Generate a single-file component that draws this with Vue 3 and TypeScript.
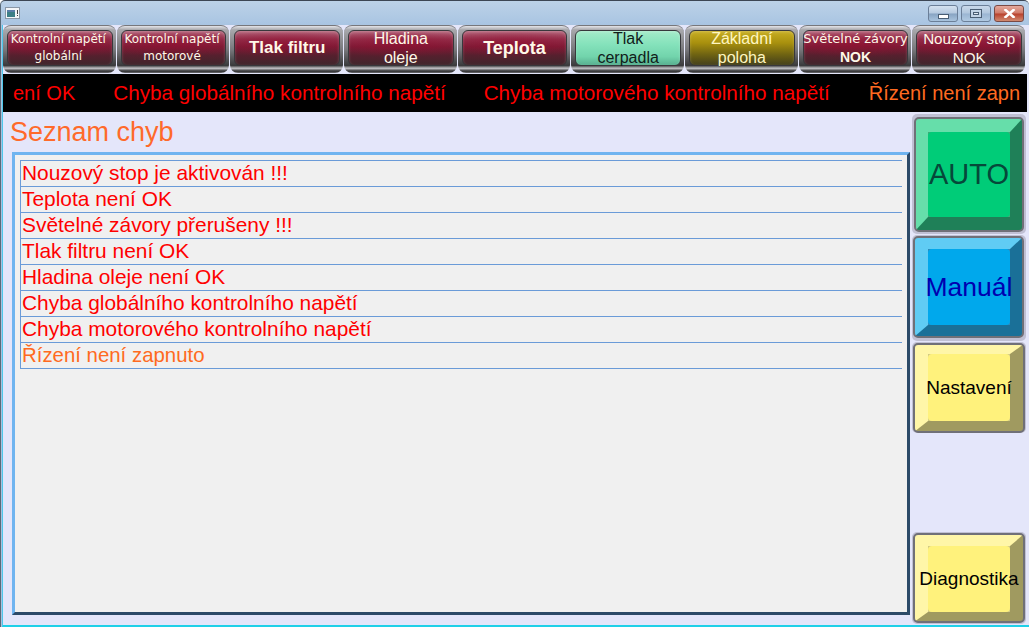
<script setup lang="ts">
interface TopButton { lines: string[]; tone: string; kind: string }
const topButtons: TopButton[] = [
  { lines: ['Kontrolní napětí', 'globální'], tone: 'red', kind: 'small' },
  { lines: ['Kontrolní napětí', 'motorové'], tone: 'red', kind: 'small' },
  { lines: ['Tlak filtru'], tone: 'red', kind: 'bold' },
  { lines: ['Hladina', 'oleje'], tone: 'red', kind: 'plain' },
  { lines: ['Teplota'], tone: 'red', kind: 'boldlg' },
  { lines: ['Tlak', 'cerpadla'], tone: 'green', kind: 'plain' },
  { lines: ['Základní', 'poloha'], tone: 'yellow', kind: 'plain' },
  { lines: ['Světelné závory', 'NOK'], tone: 'red', kind: 'mixed' },
  { lines: ['Nouzový stop', 'NOK'], tone: 'red', kind: 'narrow' },
]
const ticker = [
  { text: 'ení OK', warn: false, tail: true },
  { text: 'Chyba globálního kontrolního napětí', warn: false, tail: false },
  { text: 'Chyba motorového kontrolního napětí', warn: false, tail: false },
  { text: 'Řízení není zapn', warn: true, tail: true },
]
const errors = [
  { text: 'Nouzový stop je aktivován !!!', warn: false },
  { text: 'Teplota není OK', warn: false },
  { text: 'Světelné závory přerušeny !!!', warn: false },
  { text: 'Tlak filtru není OK', warn: false },
  { text: 'Hladina oleje není OK', warn: false },
  { text: 'Chyba globálního kontrolního napětí', warn: false },
  { text: 'Chyba motorového kontrolního napětí', warn: false },
  { text: 'Řízení není zapnuto', warn: true },
]
</script>

<template>
  <div class="window">
    <header class="titlebar">
      <svg class="app-icon" width="15" height="12" viewBox="0 0 15 12">
        <rect x="0.5" y="0.5" width="14" height="11" fill="#f4f6f8" stroke="#8a97a6" />
        <rect x="2" y="3" width="8" height="7" fill="#3d7f86" />
        <rect x="2" y="3" width="8" height="2" fill="#5a7ea8" />
        <rect x="12" y="3" width="1" height="4" fill="#404040" />
        <rect x="12" y="8" width="1" height="1" fill="#404040" />
      </svg>
      <div class="controls">
        <div class="ctl ctl-min"><span class="glyph-min"></span></div>
        <div class="ctl ctl-max"><span class="glyph-max"></span></div>
        <div class="ctl ctl-close">
          <svg width="13" height="9" viewBox="0 0 13 9">
            <path d="M2.5 1 L10.5 8 M10.5 1 L2.5 8" stroke="#fff" stroke-width="2.6" stroke-linecap="square" />
          </svg>
        </div>
      </div>
    </header>
    <div class="client">
      <nav class="topbar">
        <div v-for="(b, i) in topButtons" :key="i" class="gloss">
          <div class="gloss-face" :class="['tone-' + b.tone, 'kind-' + b.kind]">
            <span v-for="(l, j) in b.lines" :key="j" class="gloss-line">{{ l }}</span>
          </div>
        </div>
      </nav>
      <div class="ticker">
        <span v-for="(t, i) in ticker" :key="i" :class="{ warn: t.warn, tail: t.tail }">{{ t.text }}</span>
      </div>
      <div class="main">
        <section class="left">
          <h1 class="heading">Seznam chyb</h1>
          <div class="panel">
            <ul class="list">
              <li v-for="(e, i) in errors" :key="i" :class="{ warn: e.warn }">{{ e.text }}</li>
            </ul>
          </div>
        </section>
        <aside class="side">
          <div class="key key-green"><div class="key-body"><div class="key-face"><span class="key-text key-auto">AUTO</span></div></div></div>
          <div class="key key-blue"><div class="key-body"><div class="key-face"><span class="key-text key-man">Manuál</span></div></div></div>
          <div class="key key-yellow"><div class="key-body"><div class="key-face"><span class="key-text">Nastavení</span></div></div></div>
          <div class="key key-yellow key-last"><div class="key-body"><div class="key-face"><span class="key-text">Diagnostika</span></div></div></div>
        </aside>
      </div>
    </div>
  </div>
</template>

<style>
html, body { margin: 0; padding: 0; overflow: hidden; }
</style>

<style scoped>
.window {
  width: 1029px;
  height: 627px;
  box-sizing: border-box;
  display: flex;
  flex-direction: column;
  font-family: "Liberation Sans", Arial, sans-serif;
  background: linear-gradient(#bcd2e8, #a4c1e0 30px, #a4c1e0);
  border-top: 1px solid #3c4654;
  border-left: 1px solid #5a6a78;
  border-radius: 5px 5px 0 0;
  overflow: hidden;
}
.titlebar {
  height: 24px;
  flex: none;
  display: flex;
  align-items: flex-start;
  justify-content: space-between;
  padding: 6px 0 0 4px;
  box-sizing: border-box;
}
.controls { display: flex; gap: 3px; margin: -2px 5px 0 0; }
.ctl {
  width: 30px;
  height: 17px;
  box-sizing: border-box;
  border: 1px solid #6b7f98;
  border-radius: 3px;
  display: flex;
  align-items: center;
  justify-content: center;
}
.ctl-min { background: linear-gradient(#d5e2f0 0%, #b5c9df 48%, #87a3c2 52%, #a9c4de 100%); }
.ctl-max { background: linear-gradient(#c9d9ea 0%, #b0c6dd 48%, #9ab5d2 52%, #b1cae2 100%); }
.ctl-close { background: linear-gradient(#e4a99c 0%, #cf7a68 48%, #b8402c 52%, #d08a70 100%); border-color: #7a4a44; }
.glyph-min { width: 11px; height: 5px; margin-top: 6px; background: #fff; border: 1px solid #4a5e74; box-sizing: border-box; }
.glyph-max { width: 12px; height: 9px; border: 1px solid #4a5e74; box-sizing: border-box; background: #c3d4e6; position: relative; }
.glyph-max::after { content: ""; position: absolute; left: 2px; top: 2px; width: 6px; height: 3px; border: 1px solid #4a5e74; box-sizing: border-box; background: #e2ebf4; }

.client {
  flex: 1;
  min-height: 0;
  margin-left: 1px;
  background: #e4e6fa;
  display: flex;
  flex-direction: column;
  border-left: 1px solid #4ec8ea;
  border-bottom: 2px solid #20d0e8;
}
.topbar {
  height: 49px;
  flex: none;
  display: grid;
  grid-template-columns: repeat(9, minmax(0, 1fr));
  column-gap: 1px;
  padding-right: 4px;
  box-sizing: border-box;
}
.gloss {
  height: 48px;
  min-width: 0;
  box-sizing: border-box;
  border-radius: 8px;
  border-top: 1px solid #77777b;
  background: linear-gradient(#e4e4e8 0%, #a8a8ac 8%, #78787c 50%, #3a3a3c 84%, #c4c4c8 90%, #2c2c2e 96%, #707074 100%);
  padding: 4px 3px 7px 4px;
  display: flex;
}
.gloss-face {
  flex: 1;
  min-width: 0;
  border-radius: 6px;
  border: 1px solid #38383c;
  box-shadow: inset 0 1px 3px rgba(255, 255, 255, 0.22);
  display: flex;
  flex-direction: column;
  align-items: center;
  justify-content: center;
  box-sizing: border-box;
  white-space: nowrap;
}
.tone-red {
  background:
    radial-gradient(ellipse 70% 40% at 50% 38%, rgba(150, 10, 45, 0.55), rgba(150, 10, 45, 0) 100%),
    linear-gradient(#b5647a 0%, #94304c 24%, #7c1c36 46%, #56202e 72%, #40262c 100%);
  color: #fff8e8;
}
.tone-green {
  background: linear-gradient(#a4ecc9 0%, #84e2bb 40%, #72d4ac 75%, #58b090 100%);
  color: #10201a;
}
.tone-yellow {
  background: linear-gradient(#c8ae22 0%, #a8900e 35%, #6e6212 70%, #44401c 100%);
  color: #fff6c0;
}
.gloss-line { display: block; }
.kind-small { font-family: "DejaVu Sans", sans-serif; font-size: 12px; line-height: 17px; padding-right: 3px; }
.kind-bold { font-size: 17px; font-weight: 700; line-height: 22px; }
.kind-boldlg { font-size: 18px; font-weight: 700; line-height: 22px; }
.kind-plain { font-size: 16px; line-height: 19px; }
.kind-narrow { font-size: 15.2px; line-height: 19px; }
.kind-mixed { font-family: "DejaVu Sans", sans-serif; font-size: 13px; line-height: 19px; }
.kind-mixed .gloss-line + .gloss-line { font-family: "Liberation Sans", sans-serif; font-size: 14px; font-weight: 700; }

.ticker {
  height: 38px;
  flex: none;
  margin-right: 2px;
  background: #000;
  color: #ff0000;
  font-size: 20.7px;
  display: flex;
  align-items: center;
  gap: 38px;
  padding-left: 10px;
  white-space: nowrap;
  overflow: hidden;
}
.ticker .tail { font-size: 20px; }
.ticker .warn { color: #ff6a20; margin-left: 1px; }

.main { flex: 1; min-height: 0; display: flex; }
.left { flex: 1; min-width: 0; display: flex; flex-direction: column; padding: 5px 2px 10px 9px; }
.heading { margin: 0 0 4px -2px; font-size: 27px; font-weight: 400; line-height: 31px; color: #ff6a2a; }
.panel {
  flex: 1;
  background: #f0f0f0;
  border-left: 3px solid #6fb4f0;
  border-top: 3px solid #6fb4f0;
  border-right: 3px solid #2c4a68;
  border-bottom: 3px solid #2c4a68;
  padding: 5px 5px 0 5px;
}
.list {
  list-style: none;
  margin: 0;
  padding: 0;
  border-left: 1px solid #6a9bd8;
  border-bottom: 1px solid #6a9bd8;
}
.list li {
  height: 26px;
  box-sizing: border-box;
  border-top: 1px solid #6a9bd8;
  color: #ff0000;
  font-size: 20.9px;
  line-height: 24px;
  padding-left: 1px;
}
.list li.warn { color: #ff6a20; font-size: 20.4px; }

.side { width: 114px; margin-right: 3px; flex: none; display: flex; flex-direction: column; gap: 1px; padding: 2px 0 1px 0; box-sizing: border-box; }
.key {
  box-sizing: border-box;
  border-radius: 5px;
  background: #c0c0d4;
  display: flex;
}
.key-green { height: 120px; padding: 4px 3px 3px 3px; }
.key-blue { height: 106px; padding: 2px 3px 4px 2px; }
.key-yellow { height: 91px; padding: 2px 2px 1px 2px; }
.key-last { margin-top: auto; height: 92px; padding: 2px 2px 2px 2px; }
.key-body {
  flex: 1;
  min-width: 0;
  box-sizing: border-box;
  border-style: solid;
  border-width: 14px 13px;
  border-radius: 4px;
  outline: 2px solid #707078;
  outline-offset: -1px;
  display: flex;
  white-space: nowrap;
}
.key-blue .key-body { border-width: 12px 13px 12px 14px; }
.key-yellow .key-body { border-width: 10px 14px 11px 14px; }
.key-last .key-body { border-width: 12px 14px 10px 14px; }
.key-face {
  flex: 1;
  min-width: 0;
  border-radius: 4px;
  display: flex;
  align-items: center;
  justify-content: center;
}
.key-green .key-body { background: #40a878; border-color: #66deaa #1f8058 #1f8058 #66deaa; }
.key-green .key-face { background: #00cc78; }
.key-blue .key-body { background: #3088b8; border-color: #60ccf4 #1a7098 #1a7098 #60ccf4; }
.key-blue .key-face { background: #00a8ec; }
.key-yellow .key-body { background: #d0c884; border-color: #fff6a8 #a09a60 #a09a60 #fff6a8; }
.key-yellow .key-face { background: #fff27c; }
.key-text { font-size: 19px; color: #000; }
.key-auto { font-size: 29px; color: #06483a; }
.key-man { font-size: 26.5px; color: #0000b0; }
</style>
